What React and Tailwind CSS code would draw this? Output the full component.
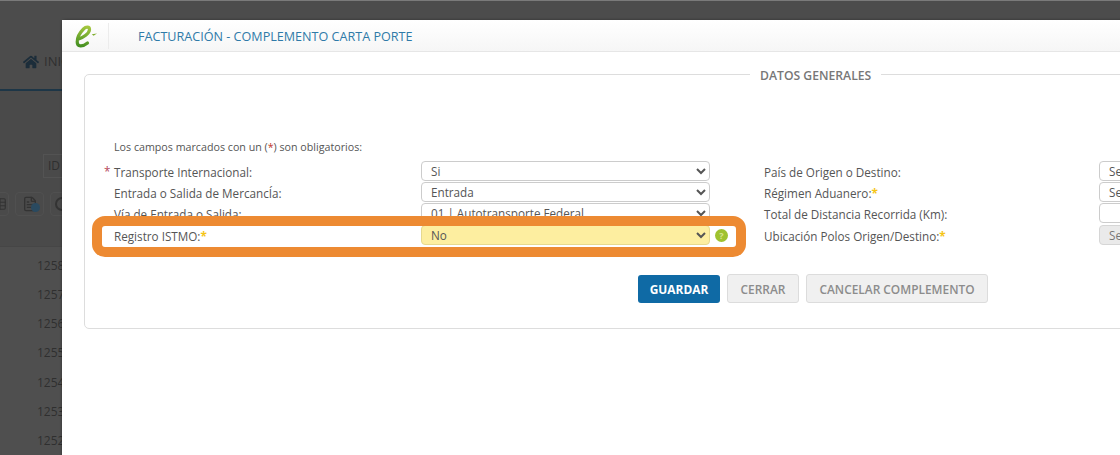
import React from 'react';
import { FaHome } from 'react-icons/fa';
import { FileText, Table } from 'lucide-react';

const filas = ['1258', '1257', '1256', '1255', '1254', '1253', '1252'];

function Logo() {
    return (
        <svg width="24" height="26" viewBox="0 0 24 26" className="ml-[12px] shrink-0">
            <defs>
                <linearGradient id="verde" gradientUnits="userSpaceOnUse" x1="10" y1="2" x2="6" y2="25">
                    <stop offset="0" stopColor="#a8c93f" />
                    <stop offset="1" stopColor="#3c8a1f" />
                </linearGradient>
            </defs>
            <path d="M4.5 16C9 14.5 15.5 10.5 15.5 6.5C15.5 3.5 12 3.5 9.5 6C6 9.5 3.2 15 3.2 19C3.2 24 8.5 24 13.5 20" fill="none" stroke="url(#verde)" strokeWidth="3.2" strokeLinecap="round" />
            <path d="M17.8 11.2L23 10.6L19.5 12.8Z" fill="#7fae2e" />
        </svg>
    );
}

function Campo({ children, className = '' }) {
    return (
        <select className={`h-[20px] w-full rounded-[4px] border border-[#cccccc] bg-white pl-[5px] text-[11.7px] text-[#555555] ${className}`}>
            {children}
        </select>
    );
}

function Etiqueta({ children, marca, roja }) {
    return (
        <div className="relative flex h-[20px] items-center pt-[2px] text-[11.7px] text-[#555555]">
            {roja && <span className="absolute left-[-10px] top-[2px] text-[#b5485a]">*</span>}
            {children}
            {marca && <span className="font-bold text-[#f5c518]">*</span>}
        </div>
    );
}

export default function App() {
    return (
        <div className="relative h-[455px] w-[1120px] overflow-hidden bg-[#4c4c4c] font-['Open_Sans',sans-serif]">
            <div className="h-px bg-[#7a7a7a]"></div>

            {/* pagina de fondo, oscurecida */}
            <div className="flex h-[454px] w-[62px] flex-col overflow-hidden whitespace-nowrap text-[#2f2f2f]">
                <div className="flex h-[91px] items-center gap-[5px] border-b-[2px] border-[#1d3647] pl-[23px] pt-[34px]">
                    <FaHome size={16} color="#1c2d3a" className="shrink-0" />
                    <span className="text-[13px]">INICIO</span>
                </div>
                <div className="flex h-[157px] flex-col border-b border-[#464646] bg-[#4a4a4a] pt-[63px]">
                    <div className="ml-[43px] flex h-[24px] w-[60px] shrink-0 items-center border border-[#535353] pl-[4px] text-[12px]">ID</div>
                    <div className="mt-[14px] flex gap-[6px]">
                        <span className="ml-[-20px] flex h-[24px] w-[29px] shrink-0 items-center justify-end rounded-[4px] border border-[#505050] pr-[1px]">
                            <Table size={14} color="#333333" />
                        </span>
                        <span className="flex h-[24px] w-[29px] shrink-0 items-center justify-center rounded-[4px] border border-[#505050]">
                            <span className="relative">
                                <FileText size={16} color="#333333" />
                                <span className="absolute bottom-0 right-[-2px] h-[9px] w-[9px] rounded-full bg-[#2a4a60]"></span>
                            </span>
                        </span>
                        <span className="flex h-[24px] w-[29px] shrink-0 items-center pl-[4px] rounded-[4px] border border-[#505050]">
                            <span className="h-[14px] w-[14px] shrink-0 rounded-full border-[2px] border-[#333333]"></span>
                        </span>
                    </div>
                </div>
                <div className="flex flex-col bg-[#4f4f4f] pt-[3px]">
                    {filas.map((f) => (
                        <div key={f} className="flex h-[29.3px] shrink-0 items-center pl-[37px] pt-[2px] text-[12px]">{f}</div>
                    ))}
                </div>
            </div>

            {/* modal */}
            <div className="absolute left-[62px] top-[20px] h-[450px] w-[1100px] rounded-t-[4px] bg-white shadow-[0_0_3px_rgba(0,0,0,0.4)]">
                <div className="flex h-[32px] items-center border-b border-[#e6e6e6] bg-gradient-to-b from-white to-[#f6f6f6]">
                    <Logo />
                    <div className="ml-[10px] h-[26px] w-px bg-[#ececec]"></div>
                    <h1 className="ml-[29px] pt-[3px] text-[12.6px] font-medium text-[#2f7aa8]">FACTURACIÓN - COMPLEMENTO CARTA PORTE</h1>
                </div>

                <fieldset className="ml-[22px] mt-[12px] h-[265px] w-[1200px] rounded-[5px] border border-[#dddddd] pl-[29px]">
                    <legend className="ml-[636px] px-[10px] pt-[3px] text-[12.2px] font-semibold text-[#777777]">DATOS GENERALES</legend>

                    <p className="mt-[54px] text-[10.7px] text-[#555555]">
                        Los campos marcados con un (<span className="text-[#c0392b]">*</span>) son obligatorios:
                    </p>

                    <div className="mt-[6px] grid grid-cols-[307px_289px_54px_335px_200px] grid-rows-[20px_20px_21px_20px] gap-y-[1px]">
                        <Etiqueta roja>Transporte Internacional:</Etiqueta>
                        <Campo><option>Si</option></Campo>
                        <div></div>
                        <Etiqueta>País de Origen o Destino:</Etiqueta>
                        <Campo><option>Seleccione</option></Campo>

                        <Etiqueta>Entrada o Salida de MercancÍa:</Etiqueta>
                        <Campo><option>Entrada</option></Campo>
                        <div></div>
                        <Etiqueta marca>Régimen Aduanero:</Etiqueta>
                        <Campo><option>Seleccione</option></Campo>

                        <Etiqueta>Vía de Entrada o Salida:</Etiqueta>
                        <Campo><option>01 | Autotransporte Federal</option></Campo>
                        <div></div>
                        <Etiqueta>Total de Distancia Recorrida (Km):</Etiqueta>
                        <input className="h-[20px] w-full rounded-[4px] border border-[#cccccc] bg-white" />

                        <Etiqueta marca>Registro ISTMO:</Etiqueta>
                        <Campo className="!border-[#e6d98f] !bg-[#fdeea0]"><option>No</option></Campo>
                        <div className="flex items-center pl-[5px]">
                            <span className="flex h-[13px] w-[13px] items-center justify-center rounded-full bg-[#9fc22f] text-[9px] font-bold leading-none text-[#d8e58f]">?</span>
                        </div>
                        <Etiqueta marca>Ubicación Polos Origen/Destino:</Etiqueta>
                        <Campo className="!bg-[#e6e6e6] opacity-80"><option>Seleccione</option></Campo>
                    </div>

                    <div className="ml-[524px] mt-[29px] flex items-center gap-[7px]">
                        <button className="h-[28px] w-[82px] rounded-[3px] bg-[#0f6aa5] pt-[2px] text-[11.9px] font-bold text-white">GUARDAR</button>
                        <button className="h-[29px] w-[72px] rounded-[3px] border border-[#dcdcdc] bg-[#f0f0f0] pt-[2px] text-[11.9px] font-semibold text-[#8c8c8c]">CERRAR</button>
                        <button className="h-[29px] w-[182px] rounded-[3px] border border-[#dcdcdc] bg-[#f0f0f0] pt-[2px] text-[11.9px] font-semibold text-[#8c8c8c]">CANCELAR COMPLEMENTO</button>
                    </div>
                </fieldset>
            </div>

            {/* resaltado naranja sobre la captura */}
            <div className="absolute left-[92px] top-[216px] h-[41px] w-[654px] rounded-[13px] border-[10px] border-[#ed8a32]"></div>
        </div>
    );
}
